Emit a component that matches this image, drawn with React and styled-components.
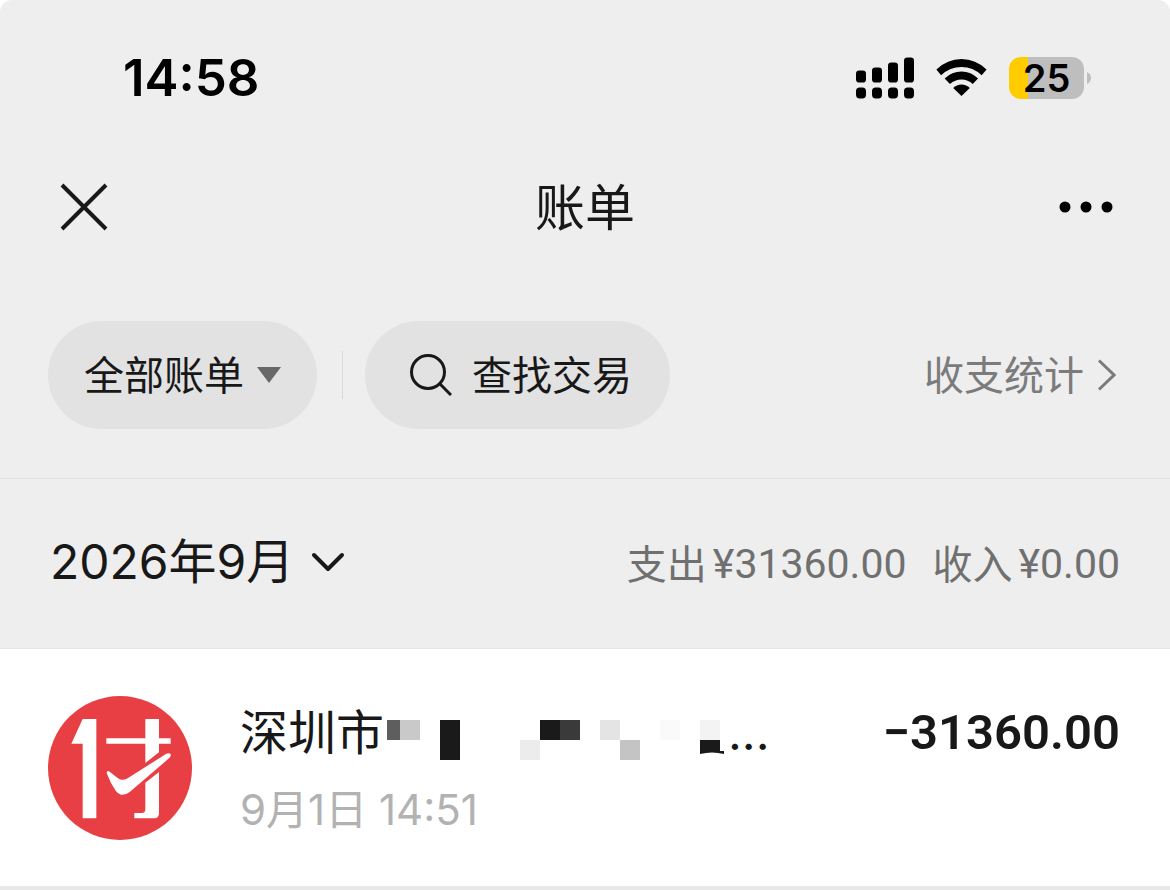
import React from "react";
import styled, { createGlobalStyle } from "styled-components";

const latin = `Inter, "Noto Sans CJK SC", sans-serif`;
const chinese = `"Noto Sans", "Noto Sans CJK SC", sans-serif`;
const money = `Roboto, "Noto Sans CJK SC", sans-serif`;

const GlobalStyle = createGlobalStyle`
  *, *::before, *::after { box-sizing: border-box; }
  body { margin: 0; background: #fff; color: #181818; font-family: ${latin}; }
  button, select { font: inherit; color: inherit; border: 0; background: none; padding: 0; margin: 0; cursor: pointer; }
  svg { display: block; flex: none; }
`;

const Header = styled.header`
  background: #eee;
  border-radius: 12px 12px 0 0;
  border-bottom: 1px solid #e2e2e2;
`;

const StatusBar = styled.div`
  display: flex;
  align-items: center;
  justify-content: space-between;
  height: 155px;
  padding: 0 79px 0 123px;
  color: #000;
`;

const Clock = styled.time`
  font-size: 51px;
  line-height: 60px;
  font-weight: 600;
`;

const StatusIcons = styled.div`
  display: flex;
  align-items: center;
  gap: 22px;
`;

const Battery = styled.div`
  display: flex;
  align-items: center;
  gap: 3px;
`;

const BatteryBody = styled.span`
  width: 75px;
  height: 42px;
  border-radius: 12px;
  background: linear-gradient(to right, #ffcc00 ${(p) => p.$level}%, #bebebe ${(p) => p.$level}%);
  font-size: 38px;
  line-height: 42px;
  font-weight: 600;
  text-align: center;
`;

const NavBar = styled.nav`
  display: grid;
  grid-template-columns: 1fr auto 1fr;
  align-items: center;
  height: 104px;
  padding: 0 57px;
`;

const IconButton = styled.button`
  justify-self: ${(p) => p.$side};
`;

const Title = styled.h1`
  margin: 0;
  font-family: ${chinese};
  font-size: 50px;
  line-height: 60px;
  font-weight: 400;
`;

const Filters = styled.div`
  display: flex;
  align-items: center;
  padding: 62px 54px 49px 48px;
  font-family: ${chinese};
  font-size: 40px;
  line-height: 48px;
`;

const Pill = styled.div`
  display: flex;
  align-items: center;
  height: 108px;
  gap: ${(p) => p.$gap}px;
  padding: 0 36px;
  border-radius: 54px;
  background: #e2e2e2;
`;

const SearchPill = styled(Pill)`
  padding: 0 38px 0 45px;
`;

const Picker = styled.select`
  appearance: none;
  line-height: inherit;
`;

const Divider = styled.span`
  width: 1px;
  height: 48px;
  margin: 0 22px 0 25px;
  background: #d8d8d8;
`;

const StatsLink = styled.a`
  display: flex;
  align-items: center;
  gap: 13px;
  margin-left: auto;
  color: #7b7b7b;
  text-decoration: none;
`;

const MonthBar = styled.section`
  display: flex;
  align-items: center;
  justify-content: space-between;
  height: 170px;
  padding: 0 50px;
  background: #eee;
  border-bottom: 1px solid #e5e5e5;
`;

const MonthPicker = styled.label`
  display: flex;
  align-items: center;
  gap: 16px;
  padding-bottom: 4px;
  font-size: 48px;
  line-height: 58px;
`;

const Totals = styled.div`
  display: flex;
  gap: 26px;
  color: #707070;
  font-family: ${money};
  font-size: 41px;
  line-height: 48px;
`;

const Total = styled.span`
  display: flex;
  gap: 6px;
`;

const TotalLabel = styled.span`
  font-family: ${chinese};
  font-size: 40px;
`;

const Entry = styled.article`
  display: flex;
  align-items: flex-start;
  gap: 48px;
  padding: 47px 50px 46px 48px;
  border-bottom: 4px solid #e8e8e8;
`;

const Details = styled.div`
  flex: 1;
  min-width: 0;
  padding-top: 8px;
`;

const EntryLine = styled.div`
  display: flex;
  align-items: center;
  height: 58px;
  font-size: 48px;
  line-height: 58px;
`;

const Payee = styled.span`
  font-family: ${latin};
`;

const Amount = styled.strong`
  margin-left: auto;
  font-family: ${money};
  font-size: 49px;
  font-weight: 600;
`;

const When = styled.time`
  display: block;
  margin-top: 24px;
  color: #b2b2b2;
  font-size: 42px;
  line-height: 48px;
`;

const bars = [
  [48, 90], [96, 81], [144, 66], [192, 51],
];

const mosaic = [
  [3, 0, 13, 20, "#5e5e5e"],
  [16, 0, 20, 20, "#c9c9c9"],
  [56, 0, 20, 40, "#1a1a1a"],
  [136, 20, 20, 20, "#ececec"],
  [156, 0, 20, 20, "#1a1a1a"],
  [176, 0, 20, 20, "#3a3a3a"],
  [216, 0, 20, 20, "#e4e4e4"],
  [236, 20, 20, 20, "#c4c4c4"],
  [276, 0, 20, 20, "#fafafa"],
  [316, 0, 20, 20, "#f3f3f3"],
];

const Signal = () => (
  <svg width="58" height="42" viewBox="48 50 174 125" aria-label="信号">
    {bars.map(([x, y]) => (
      <g key={x}>
        <rect x={x} y={y} width="30" height={126 - y} rx="10" />
        <rect x={x} y="141" width="30" height="33" rx="11" />
      </g>
    ))}
  </svg>
);

const Wifi = () => (
  <svg width="51" height="37" viewBox="289 56 152 112" aria-label="无线网络">
    <path d="M289 88Q322 56 365 56Q408 56 441 88L426 105Q400 80 365 80Q330 80 303 105Z" />
    <path d="M314 115Q336 94 365 94Q394 94 415 115L399 132Q385 118 365 118Q345 118 330 132Z" />
    <path d="M340 144Q350 133 365 133Q380 133 390 144L365 168Z" />
  </svg>
);

const Logo = () => (
  <svg width="144" height="144" viewBox="24 18 432 432" role="img" aria-label="付">
    <circle cx="240" cy="234" r="216" fill="#e83f45" />
    <g fill="#fff">
      <path d="M128 87H169V385H128V161H94Z" />
      <path d="M316 87H357V145H392V161H357V187L316 219V161H199V145H316Z" />
      <path d="M357 246V370Q357 385 343 385H283V369H306Q316 369 316 358V278Z" />
      <path d="M200 249Q201 240 209 245L234 265Q247 274 263 265L379 191Q389 188 392 193Q393 199 387 205L270 305Q257 316 243 314Q234 312 228 304Q211 279 200 249Z" />
    </g>
  </svg>
);

export default function App() {
  return (
    <main>
      <GlobalStyle />
      <Header>
        <StatusBar>
          <Clock>14:58</Clock>
          <StatusIcons>
            <Signal />
            <Wifi />
            <Battery>
              <BatteryBody $level={26}>25</BatteryBody>
              <svg width="4" height="12" viewBox="0 0 4 12" fill="#bebebe"><path d="M0 0Q4 2 4 6Q4 10 0 12Z" /></svg>
            </Battery>
          </StatusIcons>
        </StatusBar>
        <NavBar>
          <IconButton $side="start" aria-label="关闭">
            <svg width="54" height="54" viewBox="-3 -3 54 54" stroke="#181818" strokeWidth="4"><path d="M2 2L46 46M46 2L2 46" /></svg>
          </IconButton>
          <Title>账单</Title>
          <IconButton $side="end" aria-label="更多">
            <svg width="54" height="12" viewBox="0 0 54 12" fill="#000">
              <circle cx="6" cy="6" r="5.5" /><circle cx="27" cy="6" r="5.5" /><circle cx="48" cy="6" r="5.5" />
            </svg>
          </IconButton>
        </NavBar>
        <Filters>
          <Pill as="label" $gap={13}>
            <Picker aria-label="账单类型"><option>全部账单</option></Picker>
            <svg width="24" height="16" viewBox="0 0 24 16" fill="#686868"><path d="M0 0H24L12 16Z" /></svg>
          </Pill>
          <Divider />
          <SearchPill as="button" $gap={20}>
            <svg width="42" height="42" viewBox="0 0 42 42" fill="none" stroke="#181818" strokeWidth="3">
              <circle cx="18" cy="18" r="16.5" /><path d="M29.5 29.5L41 41" />
            </svg>
            查找交易
          </SearchPill>
          <StatsLink href="#stats">
            收支统计
            <svg width="19" height="32" viewBox="0 0 19 32" fill="none" stroke="currentColor" strokeWidth="3"><path d="M2 1.5L17 16L2 30.5" /></svg>
          </StatsLink>
        </Filters>
      </Header>
      <MonthBar>
        <MonthPicker>
          <Picker aria-label="月份"><option>2026年9月</option></Picker>
          <svg width="34" height="20" viewBox="0 0 34 20" fill="none" stroke="#181818" strokeWidth="4" strokeLinecap="round" strokeLinejoin="round"><path d="M3 3L17 17L31 3" /></svg>
        </MonthPicker>
        <Totals>
          <Total><TotalLabel>支出</TotalLabel><span>¥31360.00</span></Total>
          <Total><TotalLabel>收入</TotalLabel><span>¥0.00</span></Total>
        </Totals>
      </MonthBar>
      <Entry>
        <Logo />
        <Details>
          <EntryLine>
            <Payee>深圳市</Payee>
            <svg width="344" height="54" viewBox="0 -14 344 54" aria-hidden="true">
              {mosaic.map(([x, y, w, h, fill]) => (
                <rect key={x} x={x} y={y} width={w} height={h} fill={fill} />
              ))}
              <path d="M316 20H336V31H340V34Q328 31 316 34Z" fill="#1a1a1a" />
            </svg>
            ...
            <Amount>−31360.00</Amount>
          </EntryLine>
          <When>9月1日 14:51</When>
        </Details>
      </Entry>
    </main>
  );
}
